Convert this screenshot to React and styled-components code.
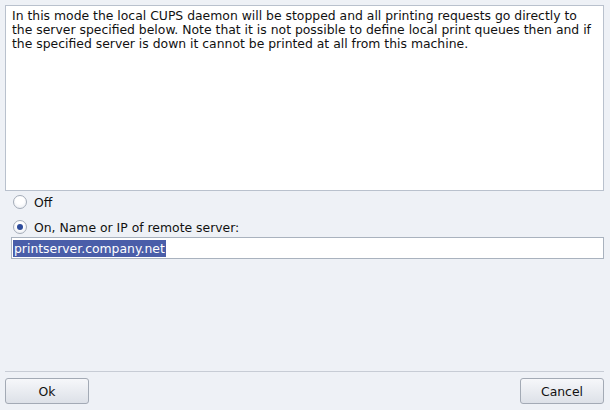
import React, { useState } from 'react'
import styled, { createGlobalStyle } from 'styled-components'

const Global = createGlobalStyle`
  html, body {
    margin: 0;
    padding: 0;
    background: #eef1f6;
  }
  * { box-sizing: border-box; }
`

const Dialog = styled.div`
  width: 610px;
  height: 410px;
  padding: 5px 6px 6px 5px;
  display: flex;
  flex-direction: column;
  font-family: "DejaVu Sans", sans-serif;
  font-size: 12.4px;
  color: #111;
  background: #eef1f6;
`

const InfoBox = styled.div`
  height: 186px;
  background: #fff;
  border: 1px solid #b9c1cd;
  padding: 3px 6px;
  line-height: 14px;
`

const RadioRow = styled.label`
  display: flex;
  align-items: center;
  gap: 7px;
  height: 14px;
  margin-left: 8px;
  margin-top: ${p => p.top}px;
  cursor: default;
`

const RadioCircle = styled.span`
  width: 14px;
  height: 14px;
  border-radius: 50%;
  border: 1px solid #a4acb8;
  background: radial-gradient(circle at 50% 35%, #ffffff 40%, #e6e9ef 100%);
  display: flex;
  align-items: center;
  justify-content: center;

  &::after {
    content: '';
    width: 6px;
    height: 6px;
    border-radius: 50%;
    background: #2e4c9c;
    display: ${p => (p.checked ? 'block' : 'none')};
  }
`

const ServerField = styled.div`
  margin: 3px 0 0 6px;
  height: 22px;
  background: #fff;
  border: 1px solid #a9b2be;
  padding: 1px 1px;
  display: flex;
  align-items: center;
`

const Selected = styled.span`
  background: #4a5ea9;
  color: #fff;
  line-height: 17px;
  padding: 0 1px 0 1px;
`

const Spacer = styled.div`
  flex: 1;
`

const Separator = styled.div`
  height: 1px;
  background: #c7ccd5;
  margin-bottom: 6px;
`

const ButtonBar = styled.div`
  display: flex;
  justify-content: space-between;
`

const Button = styled.button`
  width: 84px;
  height: 26px;
  border: 1px solid #a3aab5;
  border-radius: 3px;
  background: linear-gradient(#f6f7fa, #dde1e8);
  font-family: "DejaVu Sans", sans-serif;
  font-size: 12.4px;
  color: #111;
  padding: 0;
`

export default function App() {
  const [mode, setMode] = useState('on')
  return (
    <>
      <Global />
      <Dialog>
        <InfoBox>
          In this mode the local CUPS daemon will be stopped and all printing requests go directly to
          <br />
          the server specified below. Note that it is not possible to define local print queues then and if
          <br />
          the specified server is down it cannot be printed at all from this machine.
        </InfoBox>
        <RadioRow top={4} onClick={() => setMode('off')}>
          <RadioCircle checked={mode === 'off'} />
          Off
        </RadioRow>
        <RadioRow top={11} onClick={() => setMode('on')}>
          <RadioCircle checked={mode === 'on'} />
          On, Name or IP of remote server:
        </RadioRow>
        <ServerField>
          <Selected>printserver.company.net</Selected>
        </ServerField>
        <Spacer />
        <Separator />
        <ButtonBar>
          <Button>Ok</Button>
          <Button>Cancel</Button>
        </ButtonBar>
      </Dialog>
    </>
  )
}
